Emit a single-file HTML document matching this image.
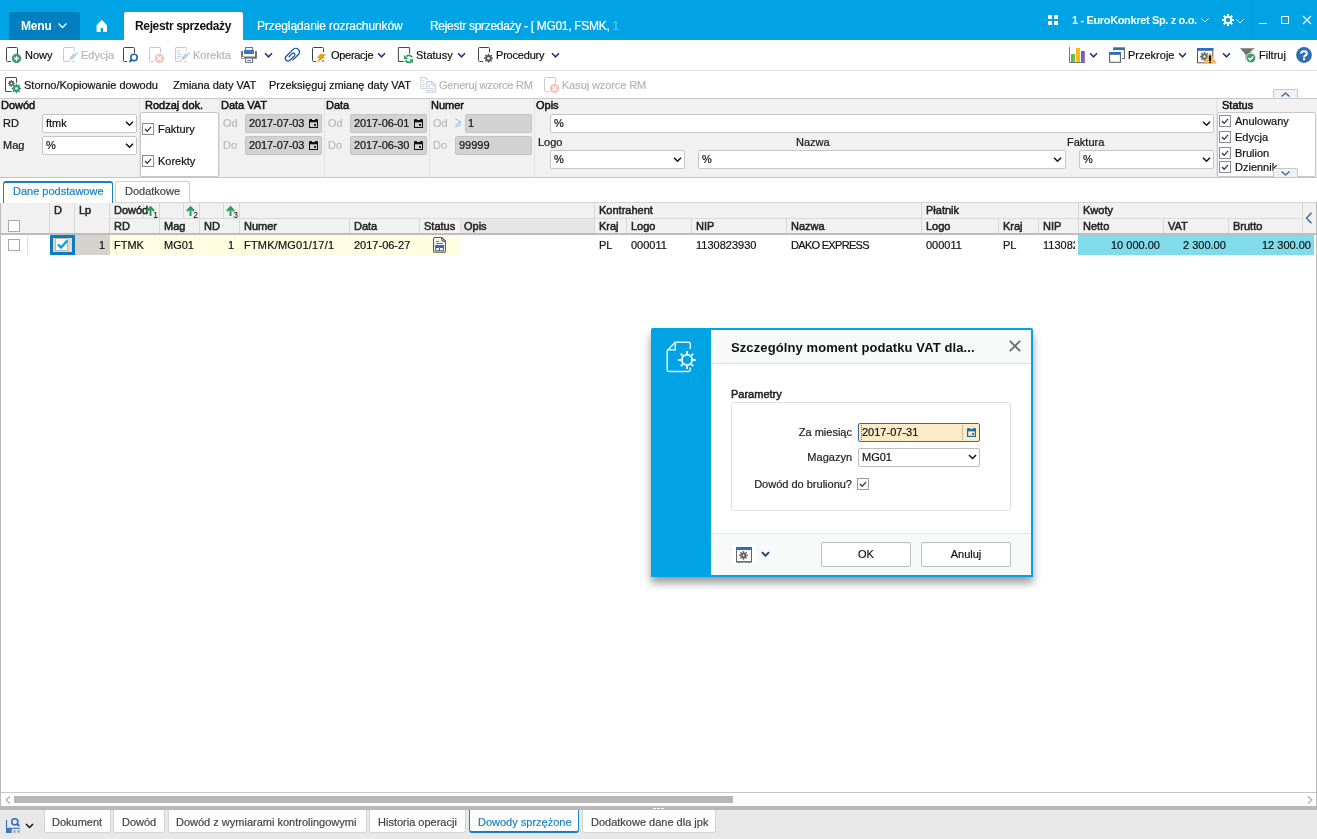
<!DOCTYPE html>
<html><head><meta charset="utf-8">
<style>
*{box-sizing:border-box;margin:0;padding:0}
html,body{width:1317px;height:839px;overflow:hidden;background:#fff;font-family:"Liberation Sans",sans-serif;font-size:11px;color:#111}
.a{position:absolute}
.t{position:absolute;white-space:nowrap;line-height:14px;font-size:11px;will-change:transform}
.t:not(.b):not(.bb){-webkit-text-stroke:0.2px currentColor}
.b{font-weight:normal;-webkit-text-stroke:0.5px currentColor}
.bb{font-weight:bold;letter-spacing:-0.4px}
svg{position:absolute;overflow:visible}
#hdr{position:absolute;left:0;top:0;width:1317px;height:40px;background:#00a3e3}
.dis{color:#b4b4b4}
.chev{position:absolute;width:8px;height:5px}

.sel{position:absolute;background:#fff;border:1px solid #c6c6c6;border-radius:2px}
.dt{position:absolute;background:#d2d2d2;border:1px solid #c4c4c4;border-radius:2px}
.cb{position:absolute;width:12px;height:12px;border:1px solid #8a8a8a;background:#fff}
.gl{color:#b8b8b8}
.vd{position:absolute;top:99px;width:1px;height:78px;background:#e2e2e2}

.gh{position:absolute;background:#f1f1f1}
.gv{position:absolute;width:1px;background:#d8d8d8}
.gt{will-change:transform;position:absolute;white-space:nowrap;line-height:14px;font-size:11px;font-weight:normal;-webkit-text-stroke:0.5px currentColor;color:#222}
.sort{position:absolute}
</style></head><body>
<!-- HEADER -->
<div id="hdr">
  <div class="a" style="left:9px;top:12px;width:71px;height:28px;background:#007fc0;border-radius:2px 2px 0 0"></div>
  <div class="t bb" style="left:21px;top:19px;font-size:12px;color:#fff;letter-spacing:-0.2px">Menu</div>
  <svg style="left:58px;top:23px" width="9" height="6" viewBox="0 0 9 6"><path d="M0.5 0.5L4.5 4.5L8.5 0.5" fill="none" stroke="#fff" stroke-width="1.3"/></svg>
  <svg style="left:96px;top:19px" width="12" height="13" viewBox="0 0 12 13"><path d="M0.6 6.3L5.8 0.8L11 6.3V13H7V9H4.6V13H0.6Z" fill="#fff"/></svg>
  <div class="a" style="left:124px;top:12px;width:119px;height:28px;background:#fff;border-radius:2px 2px 0 0"></div>
  <div class="t bb" style="left:135px;top:19px;font-size:12px;color:#111;letter-spacing:-0.35px">Rejestr sprzedaży</div>
  <div class="t" style="left:257px;top:19px;font-size:12px;color:#fff;letter-spacing:-0.1px">Przeglądanie rozrachunków</div>
  <div class="t" style="left:430px;top:19px;font-size:12px;color:#fff;letter-spacing:-0.3px">Rejestr sprzedaży - [ MG01, FSMK, <span style="color:#5cc4ee">1</span></div>
  <svg style="left:1048px;top:15px" width="10" height="10" viewBox="0 0 10 10" fill="#fff"><rect x="0" y="0" width="4" height="4"/><rect x="6" y="0" width="4" height="4"/><rect x="0" y="6" width="4" height="4"/><rect x="6" y="6" width="4" height="4"/></svg>
  <div class="t bb" style="left:1072px;top:13px;font-size:11px;color:#fff;letter-spacing:-0.35px">1 - EuroKonkret Sp. z o.o.</div>
  <svg style="left:1201px;top:18px" width="8" height="5" viewBox="0 0 8 5"><path d="M0.5 0.5L4 4L7.5 0.5" fill="none" stroke="#fff" stroke-width="1"/></svg>
  <svg style="left:1222px;top:14px" width="12" height="12" viewBox="0 0 12 12"><g fill="#fff"><circle cx="6" cy="6" r="4"/><rect x="5" y="0" width="2" height="12"/><rect x="0" y="5" width="12" height="2"/><rect x="5" y="0" width="2" height="12" transform="rotate(45 6 6)"/><rect x="5" y="0" width="2" height="12" transform="rotate(-45 6 6)"/></g><circle cx="6" cy="6" r="2.2" fill="#00a3e3"/></svg>
  <svg style="left:1236px;top:19px" width="8" height="5" viewBox="0 0 8 5"><path d="M0.5 0.5L4 4L7.5 0.5" fill="none" stroke="#fff" stroke-width="1"/></svg>
  <div class="a" style="left:1251px;top:0;width:1px;height:40px;background:#0a8fc8"></div>
  <div class="a" style="left:1259px;top:23px;width:8px;height:1px;background:#fff"></div>
  <div class="a" style="left:1281px;top:16px;width:8px;height:8px;border:1px solid #fff"></div>
  <svg style="left:1303px;top:16px" width="8" height="8" viewBox="0 0 8 8"><path d="M0 0L8 8M8 0L0 8" stroke="#fff" stroke-width="1.1"/></svg>
</div>

<!-- TOOLBAR 1 -->
<div class="a" style="left:0;top:70px;width:1317px;height:1px;background:#dcdcdc"></div>
<svg style="left:5px;top:46px" width="18" height="18" viewBox="0 0 18 18"><path d="M12.5 8V2.5Q12.5 1.5 11.5 1.5H2.5Q1.5 1.5 1.5 2.5V14.5Q1.5 15.5 2.5 15.5H6" fill="none" stroke="#444" stroke-width="1"/><circle cx="11.5" cy="12.5" r="4.7" fill="#3a9e6e"/><path d="M11.5 10V15M9 12.5H14" stroke="#fff" stroke-width="1.3"/></svg>
<div class="t" style="left:25px;top:48px">Nowy</div>
<svg style="left:62px;top:46px" width="18" height="18" viewBox="0 0 18 18"><path d="M12.5 5V2.5Q12.5 1.5 11.5 1.5H2.5Q1.5 1.5 1.5 2.5V14.5Q1.5 15.5 2.5 15.5H5M10 15.5H11.5Q12.5 15.5 12.5 14.5" fill="none" stroke="#c8c8c8" stroke-width="1"/><path d="M8.3 13.1L13.3 8.1" stroke="#b8cfe8" stroke-width="3.4"/><path d="M13.9 6.5L15.7 8.3" stroke="#b8cfe8" stroke-width="1.6"/><path d="M5.2 16.6L6.5 13.4L8.4 15.3Z" fill="#b8cfe8"/></svg>
<div class="t dis" style="left:81px;top:48px">Edycja</div>
<svg style="left:122px;top:46px" width="18" height="18" viewBox="0 0 18 18"><path d="M12.5 7V2.5Q12.5 1.5 11.5 1.5H2.5Q1.5 1.5 1.5 2.5V14.5Q1.5 15.5 2.5 15.5H5" fill="none" stroke="#444" stroke-width="1"/><circle cx="12" cy="11.5" r="3.2" fill="none" stroke="#2a64b0" stroke-width="1.6"/><path d="M9.8 13.8L7.5 16" stroke="#2a64b0" stroke-width="2"/></svg>
<svg style="left:148px;top:46px" width="18" height="18" viewBox="0 0 18 18"><path d="M12.5 7V2.5Q12.5 1.5 11.5 1.5H2.5Q1.5 1.5 1.5 2.5V14.5Q1.5 15.5 2.5 15.5H6" fill="none" stroke="#c8c8c8" stroke-width="1"/><circle cx="11.5" cy="12.5" r="4.7" fill="#f2c4bc"/><path d="M9.5 10.5L13.5 14.5M13.5 10.5L9.5 14.5" stroke="#fff" stroke-width="1.2"/></svg>
<svg style="left:174px;top:46px" width="18" height="18" viewBox="0 0 18 18"><path d="M12.5 5V2.5Q12.5 1.5 11.5 1.5H2.5Q1.5 1.5 1.5 2.5V14.5Q1.5 15.5 2.5 15.5H5M10 15.5H11.5Q12.5 15.5 12.5 14.5" fill="none" stroke="#c8c8c8" stroke-width="1"/><path d="M3 4.5H6M3 6.5H6M3 8.5H8M3 10.5H7M3 12.5H6" stroke="#bcd0e8" stroke-width="0.8"/><path d="M8.3 13.1L13.3 8.1" stroke="#b8cfe8" stroke-width="3.4"/><path d="M13.9 6.5L15.7 8.3" stroke="#b8cfe8" stroke-width="1.6"/><path d="M5.2 16.6L6.5 13.4L8.4 15.3Z" fill="#b8cfe8"/></svg>
<div class="t dis" style="left:193px;top:48px">Korekta</div>
<svg style="left:240px;top:46px" width="18" height="18" viewBox="0 0 18 18"><rect x="5.6" y="1.5" width="6.9" height="3.5" fill="#fff" stroke="#707070" stroke-width="1"/><path d="M1.1 5H3.1V10.5H15V5H16.9V12.7H1.1Z" fill="#707070"/><rect x="4" y="3.9" width="10" height="4.1" fill="#3a78c0"/><rect x="2" y="10.9" width="2" height="1.3" fill="#fff"/><rect x="5.6" y="12.1" width="6.9" height="4.3" fill="#fff" stroke="#707070" stroke-width="1"/><path d="M7.2 14.5H10.9" stroke="#3a78c0" stroke-width="1"/></svg>
<svg style="left:264px;top:52px" width="9" height="7" viewBox="0 0 9 7"><path d="M1 1.2L4.5 4.8L8 1.2" fill="none" stroke="#1a3a6e" stroke-width="1.5"/></svg>
<svg style="left:280px;top:45px" width="24" height="21" viewBox="0 0 24 21"><path d="M12.4 15.4L18.35 9.45A3.6 3.6 0 0 0 13.25 4.35L5.8 11.7A2.78 2.78 0 0 0 9.7 15.55L14.6 10.65A1.6 1.6 0 0 0 12.35 8.4L8.8 11.95" fill="none" stroke="#1a4ea8" stroke-width="1.25"/></svg>
<svg style="left:311px;top:46px" width="18" height="18" viewBox="0 0 18 18"><path d="M12.5 6V2.5Q12.5 1.5 11.5 1.5H2.5Q1.5 1.5 1.5 2.5V14.5Q1.5 15.5 2.5 15.5H5" fill="none" stroke="#444" stroke-width="1"/><path d="M12.5 14V14.5Q12.5 15.5 11.5 15.5H10.8" fill="none" stroke="#444" stroke-width="1"/><path d="M9.2 8.1L15.2 8.2L12.4 10.8L14 11.2L5.2 16.9L8.6 12.4L6 11.9Z" fill="#e89a1a"/></svg>
<div class="t" style="left:331px;top:48px;letter-spacing:-0.3px">Operacje</div>
<svg style="left:377px;top:52px" width="9" height="7" viewBox="0 0 9 7"><path d="M1 1.2L4.5 4.8L8 1.2" fill="none" stroke="#1a3a6e" stroke-width="1.5"/></svg>
<svg style="left:396px;top:45px" width="20" height="20" viewBox="0 0 20 20"><path d="M13.6 8.8V3.4Q13.6 2.4 12.6 2.4H3.4Q2.4 2.4 2.4 3.4V15.4Q2.4 16.4 3.4 16.4H7.6" fill="none" stroke="#4a4a4a" stroke-width="1.05"/><path d="M16.2 12.4A3.6 3.6 0 0 0 10.4 11.6M9.5 15.4A3.6 3.6 0 0 0 15.4 16.3" fill="none" stroke="#1f9a5c" stroke-width="1.7"/><path d="M8 9.9V13.9H12Z M13.2 14.2H17V18Z" fill="#1f9a5c"/></svg>
<div class="t" style="left:416px;top:48px">Statusy</div>
<svg style="left:457px;top:52px" width="9" height="7" viewBox="0 0 9 7"><path d="M1 1.2L4.5 4.8L8 1.2" fill="none" stroke="#1a3a6e" stroke-width="1.5"/></svg>
<svg style="left:477px;top:46px" width="18" height="18" viewBox="0 0 18 18"><path d="M12.5 6.5V2.5Q12.5 1.5 11.5 1.5H2.5Q1.5 1.5 1.5 2.5V14.5Q1.5 15.5 2.5 15.5H6" fill="none" stroke="#444" stroke-width="1"/><path d="M10.73 8.99L10.92 7.64L12.08 7.64L12.27 8.99L13.22 9.39L14.32 8.57L15.13 9.38L14.31 10.48L14.71 11.43L16.06 11.62L16.06 12.78L14.71 12.97L14.31 13.92L15.13 15.02L14.32 15.83L13.22 15.01L12.27 15.41L12.08 16.76L10.92 16.76L10.73 15.41L9.78 15.01L8.68 15.83L7.87 15.02L8.69 13.92L8.29 12.97L6.94 12.78L6.94 11.62L8.29 11.43L8.69 10.48L7.87 9.38L8.68 8.57L9.78 9.39Z" fill="#555"/><circle cx="11.5" cy="12.2" r="1.3" fill="#fff"/></svg>
<div class="t" style="left:496px;top:48px;letter-spacing:-0.2px">Procedury</div>
<svg style="left:551px;top:52px" width="9" height="7" viewBox="0 0 9 7"><path d="M1 1.2L4.5 4.8L8 1.2" fill="none" stroke="#1a3a6e" stroke-width="1.5"/></svg>

<!-- right toolbar -->
<svg style="left:1068px;top:46px" width="18" height="18" viewBox="0 0 18 18"><path d="M1.5 1V16.5H17" fill="none" stroke="#777" stroke-width="1"/><rect x="3" y="8" width="3.9" height="8" fill="#5cb860"/><rect x="8" y="2" width="4" height="14" fill="#fbbd08"/><rect x="13" y="5" width="3.8" height="11" fill="#7e57c8"/></svg>
<svg style="left:1089px;top:52px" width="9" height="7" viewBox="0 0 9 7"><path d="M1 1.2L4.5 4.8L8 1.2" fill="none" stroke="#1a3a6e" stroke-width="1.5"/></svg>
<svg style="left:1108px;top:46px" width="18" height="18" viewBox="0 0 18 18"><path d="M5.5 4.5V3.5M16.4 3V12.5H14.1" fill="none" stroke="#555" stroke-width="1"/><rect x="5.1" y="1.3" width="11.8" height="2.7" fill="#2f6db5"/><rect x="1.6" y="6.5" width="10.8" height="9.8" fill="#fff" stroke="#555" stroke-width="1"/><rect x="1.1" y="6" width="11.8" height="2.8" fill="#2f6db5"/></svg>
<div class="t" style="left:1128px;top:48px">Przekroje</div>
<svg style="left:1178px;top:52px" width="9" height="7" viewBox="0 0 9 7"><path d="M1 1.2L4.5 4.8L8 1.2" fill="none" stroke="#1a3a6e" stroke-width="1.5"/></svg>
<svg style="left:1196px;top:46px" width="22" height="20" viewBox="0 0 22 20"><rect x="1.5" y="2.5" width="15.3" height="14.3" fill="#fff" stroke="#555" stroke-width="1"/><rect x="1" y="2" width="16.3" height="2.8" fill="#2f6db5"/><g transform="translate(8.5 10.5)" fill="#666"><circle r="3"/><rect x="-0.8" y="-4.6" width="1.6" height="9.2"/><rect x="-4.6" y="-0.8" width="9.2" height="1.6"/><rect x="-0.8" y="-4.6" width="1.6" height="9.2" transform="rotate(45)"/><rect x="-0.8" y="-4.6" width="1.6" height="9.2" transform="rotate(-45)"/><circle r="1.2" fill="#fff"/></g><path d="M14 6.2L20.9 17.6H7.6Z" fill="#f0b860"/><rect x="13" y="9.5" width="2" height="5.5" fill="#111"/><rect x="13" y="15.7" width="2" height="1.2" fill="#111"/></svg>
<svg style="left:1222px;top:52px" width="9" height="7" viewBox="0 0 9 7"><path d="M1 1.2L4.5 4.8L8 1.2" fill="none" stroke="#1a3a6e" stroke-width="1.5"/></svg>
<svg style="left:1239px;top:46px" width="18" height="18" viewBox="0 0 18 18"><path d="M1 2.2H15.8L10 8.5L6.5 14.5V8.5Z" fill="#707070"/><path d="M14.6 3L11.6 6" stroke="#fff" stroke-width="1"/><circle cx="11.9" cy="12" r="4.9" fill="#3aa06a" stroke="#fff" stroke-width="0.8"/><path d="M9.5 12L11.2 13.8L14.3 10.5" fill="none" stroke="#fff" stroke-width="1.6"/></svg>
<div class="t" style="left:1259px;top:48px">Filtruj</div>
<svg style="left:1296px;top:47px" width="16" height="16" viewBox="0 0 16 16"><circle cx="8" cy="8" r="7.9" fill="#2f6db3"/><path d="M5.2 6.5Q5.2 4.3 8 4.3Q10.8 4.3 10.8 6.4Q10.8 7.6 9.4 8.4Q8.1 9.1 8.1 10.4" fill="none" stroke="#fff" stroke-width="2.1"/><rect x="7" y="11.3" width="2.2" height="1.9" fill="#fff"/></svg>

<!-- TOOLBAR 2 -->
<div class="a" style="left:0;top:98px;width:1317px;height:1px;background:#c8c8c8"></div>
<svg style="left:4px;top:76px" width="18" height="18" viewBox="0 0 18 18"><path d="M12.5 6.7V2.5Q12.5 1.5 11.5 1.5H2.5Q1.5 1.5 1.5 2.5V14.5Q1.5 15.5 2.5 15.5H7.7" fill="none" stroke="#4a4a4a" stroke-width="1.05"/><path d="M6.82 4.97L6.96 3.93L7.84 3.93L7.98 4.97L8.71 5.27L9.55 4.63L10.17 5.25L9.53 6.09L9.83 6.82L10.87 6.96L10.87 7.84L9.83 7.98L9.53 8.71L10.17 9.55L9.55 10.17L8.71 9.53L7.98 9.83L7.84 10.87L6.96 10.87L6.82 9.83L6.09 9.53L5.25 10.17L4.63 9.55L5.27 8.71L4.97 7.98L3.93 7.84L3.93 6.96L4.97 6.82L5.27 6.09L4.63 5.25L5.25 4.63L6.09 5.27Z" fill="#555"/><circle cx="7.4" cy="7.4" r="1.0" fill="#fff"/><path d="M11.58 9.00L11.80 7.64L13.00 7.64L13.22 9.00L14.23 9.42L15.34 8.61L16.19 9.46L15.38 10.57L15.80 11.58L17.16 11.80L17.16 13.00L15.80 13.22L15.38 14.23L16.19 15.34L15.34 16.19L14.23 15.38L13.22 15.80L13.00 17.16L11.80 17.16L11.58 15.80L10.57 15.38L9.46 16.19L8.61 15.34L9.42 14.23L9.00 13.22L7.64 13.00L7.64 11.80L9.00 11.58L9.42 10.57L8.61 9.46L9.46 8.61L10.57 9.42Z" fill="#2a9a62"/><circle cx="12.4" cy="12.4" r="1.3" fill="#fff"/></svg>
<div class="t" style="left:24px;top:78px">Storno/Kopiowanie dowodu</div>
<div class="t" style="left:173px;top:78px">Zmiana daty VAT</div>
<div class="t" style="left:269px;top:78px">Przeksięguj zmianę daty VAT</div>
<svg style="left:416px;top:73px" width="22" height="22" viewBox="0 0 22 22"><path d="M10 15.6H4.8V4.6H9.6L12.4 7.4" fill="none" stroke="#cdcdcd" stroke-width="1"/><path d="M9.6 4.6V6.6" stroke="#cdcdcd" stroke-width="1"/><path d="M6 7.4H7.8M6 9.4H7.8M6 11.4H8.8M6 13.4H8.8" stroke="#bcd2ea" stroke-width="1"/><path d="M10.8 8.6H15.8L19.3 12.1V19.3H10.8Z" fill="#fff" stroke="#cdcdcd" stroke-width="1.1"/><path d="M15.6 8.6V11.8Q15.6 12.3 16.1 12.3H19.3" fill="none" stroke="#cdcdcd" stroke-width="1"/><path d="M12.1 11.4H14M12.1 13.4H14M12.1 15.4H17.8M12.1 17.4H17.8" stroke="#bcd2ea" stroke-width="1"/></svg>
<div class="t dis" style="left:439px;top:78px;letter-spacing:-0.2px">Generuj wzorce RM</div>
<svg style="left:543px;top:76px" width="18" height="18" viewBox="0 0 18 18"><path d="M12.5 7V2.5Q12.5 1.5 11.5 1.5H2.5Q1.5 1.5 1.5 2.5V14.5Q1.5 15.5 2.5 15.5H6" fill="none" stroke="#ccc" stroke-width="1"/><circle cx="11.5" cy="12.5" r="4.7" fill="#f2c4bc"/><path d="M9.5 10.5L13.5 14.5M13.5 10.5L9.5 14.5" stroke="#fff" stroke-width="1.2"/></svg>
<div class="t dis" style="left:562px;top:78px;letter-spacing:-0.1px">Kasuj wzorce RM</div>

<!-- FILTER PANEL -->
<div class="a" style="left:0;top:99px;width:1317px;height:78px;background:#f1f1f1"></div>
<div class="a" style="left:0;top:177px;width:1317px;height:1px;background:#c4c4c4"></div>
<div class="vd" style="left:139px"></div>
<div class="vd" style="left:219px"></div>
<div class="vd" style="left:324px"></div>
<div class="vd" style="left:429px"></div>
<div class="vd" style="left:534px"></div>
<div class="vd" style="left:1216px"></div>
<div class="t b" style="left:1px;top:98px">Dowód</div>
<div class="t" style="left:3px;top:116px">RD</div>
<div class="sel" style="left:42px;top:114px;width:95px;height:19px"></div>
<div class="t" style="left:46px;top:116px">ftmk</div>
<svg style="left:125px;top:121px" width="9" height="6" viewBox="0 0 9 6"><path d="M1 0.8L4.5 4.3L8 0.8" fill="none" stroke="#111" stroke-width="1.5"/></svg>
<div class="t" style="left:3px;top:138px">Mag</div>
<div class="sel" style="left:42px;top:136px;width:95px;height:19px"></div>
<div class="t" style="left:46px;top:138px">%</div>
<svg style="left:125px;top:143px" width="9" height="6" viewBox="0 0 9 6"><path d="M1 0.8L4.5 4.3L8 0.8" fill="none" stroke="#111" stroke-width="1.5"/></svg>
<div class="t b" style="left:145px;top:98px">Rodzaj dok.</div>
<div class="a" style="left:140px;top:112px;width:79px;height:65px;background:#fff;border:1px solid #c8c8c8;border-radius:2px"></div>
<svg style="left:142px;top:123px" width="12" height="12" viewBox="0 0 12 12"><rect x="0.5" y="0.5" width="11" height="11" fill="#fff" stroke="#8c8c8c" stroke-width="1"/><path d="M3 6L5.2 8.3L9 3.8" fill="none" stroke="#1a3a6e" stroke-width="1.3"/></svg>
<div class="t" style="left:158px;top:122px">Faktury</div>
<svg style="left:142px;top:155px" width="12" height="12" viewBox="0 0 12 12"><rect x="0.5" y="0.5" width="11" height="11" fill="#fff" stroke="#8c8c8c" stroke-width="1"/><path d="M3 6L5.2 8.3L9 3.8" fill="none" stroke="#1a3a6e" stroke-width="1.3"/></svg>
<div class="t" style="left:158px;top:154px">Korekty</div>

<div class="t b" style="left:221px;top:98px">Data VAT</div>
<div class="t gl" style="left:223px;top:116px">Od</div>
<div class="dt" style="left:245px;top:114px;width:77px;height:19px"></div>
<div class="t" style="left:249px;top:116px;letter-spacing:-0.1px">2017-07-03</div>
<svg style="left:309px;top:119px" width="9" height="9" viewBox="0 0 9 9"><rect x="0.3" y="0" width="2.6" height="1.5" fill="#111"/><rect x="6.1" y="0" width="2.6" height="1.5" fill="#111"/><rect x="0" y="1" width="9" height="2.3" fill="#111"/><rect x="0.5" y="1.5" width="8" height="7" fill="none" stroke="#111" stroke-width="1"/><rect x="5" y="5" width="2" height="1.8" fill="#111"/></svg>
<div class="t gl" style="left:223px;top:138px">Do</div>
<div class="dt" style="left:245px;top:136px;width:77px;height:19px"></div>
<div class="t" style="left:249px;top:138px;letter-spacing:-0.1px">2017-07-03</div>
<svg style="left:309px;top:141px" width="9" height="9" viewBox="0 0 9 9"><rect x="0.3" y="0" width="2.6" height="1.5" fill="#111"/><rect x="6.1" y="0" width="2.6" height="1.5" fill="#111"/><rect x="0" y="1" width="9" height="2.3" fill="#111"/><rect x="0.5" y="1.5" width="8" height="7" fill="none" stroke="#111" stroke-width="1"/><rect x="5" y="5" width="2" height="1.8" fill="#111"/></svg>

<div class="t b" style="left:326px;top:98px">Data</div>
<div class="t gl" style="left:328px;top:116px">Od</div>
<div class="dt" style="left:350px;top:114px;width:77px;height:19px"></div>
<div class="t" style="left:354px;top:116px;letter-spacing:-0.1px">2017-06-01</div>
<svg style="left:414px;top:119px" width="9" height="9" viewBox="0 0 9 9"><rect x="0.3" y="0" width="2.6" height="1.5" fill="#111"/><rect x="6.1" y="0" width="2.6" height="1.5" fill="#111"/><rect x="0" y="1" width="9" height="2.3" fill="#111"/><rect x="0.5" y="1.5" width="8" height="7" fill="none" stroke="#111" stroke-width="1"/><rect x="5" y="5" width="2" height="1.8" fill="#111"/></svg>
<div class="t gl" style="left:328px;top:138px">Do</div>
<div class="dt" style="left:350px;top:136px;width:77px;height:19px"></div>
<div class="t" style="left:354px;top:138px;letter-spacing:-0.1px">2017-06-30</div>
<svg style="left:414px;top:141px" width="9" height="9" viewBox="0 0 9 9"><rect x="0.3" y="0" width="2.6" height="1.5" fill="#111"/><rect x="6.1" y="0" width="2.6" height="1.5" fill="#111"/><rect x="0" y="1" width="9" height="2.3" fill="#111"/><rect x="0.5" y="1.5" width="8" height="7" fill="none" stroke="#111" stroke-width="1"/><rect x="5" y="5" width="2" height="1.8" fill="#111"/></svg>

<div class="t b" style="left:431px;top:98px">Numer</div>
<div class="t gl" style="left:433px;top:116px">Od</div>
<svg style="left:455px;top:118px" width="7" height="11" viewBox="0 0 7 11"><path d="M0.5 1L6 4L0.5 7M0.5 9L6 6.5" fill="none" stroke="#8fb4dc" stroke-width="1"/></svg>
<div class="dt" style="left:465px;top:114px;width:67px;height:19px"></div>
<div class="t" style="left:468px;top:116px">1</div>
<div class="t gl" style="left:433px;top:138px">Do</div>
<div class="dt" style="left:455px;top:136px;width:77px;height:19px"></div>
<div class="t" style="left:459px;top:138px">99999</div>

<div class="t b" style="left:536px;top:98px">Opis</div>
<div class="sel" style="left:550px;top:114px;width:664px;height:19px"></div>
<div class="t" style="left:554px;top:116px">%</div>
<svg style="left:1202px;top:121px" width="9" height="6" viewBox="0 0 9 6"><path d="M1 0.8L4.5 4.3L8 0.8" fill="none" stroke="#111" stroke-width="1.5"/></svg>
<div class="t" style="left:538px;top:135px">Logo</div>
<div class="sel" style="left:550px;top:150px;width:135px;height:19px"></div>
<div class="t" style="left:554px;top:152px">%</div>
<svg style="left:673px;top:157px" width="9" height="6" viewBox="0 0 9 6"><path d="M1 0.8L4.5 4.3L8 0.8" fill="none" stroke="#111" stroke-width="1.5"/></svg>
<div class="t" style="left:796px;top:135px">Nazwa</div>
<div class="sel" style="left:698px;top:150px;width:368px;height:19px"></div>
<div class="t" style="left:702px;top:152px">%</div>
<svg style="left:1053px;top:157px" width="9" height="6" viewBox="0 0 9 6"><path d="M1 0.8L4.5 4.3L8 0.8" fill="none" stroke="#111" stroke-width="1.5"/></svg>
<div class="t" style="left:1067px;top:135px">Faktura</div>
<div class="sel" style="left:1079px;top:150px;width:135px;height:19px"></div>
<div class="t" style="left:1083px;top:152px">%</div>
<svg style="left:1202px;top:157px" width="9" height="6" viewBox="0 0 9 6"><path d="M1 0.8L4.5 4.3L8 0.8" fill="none" stroke="#111" stroke-width="1.5"/></svg>

<div class="t b" style="left:1222px;top:98px">Status</div>
<div class="a" style="left:1217px;top:112px;width:99px;height:65px;background:#fff;border:1px solid #c8c8c8;border-radius:2px"></div>
<svg style="left:1219px;top:115px" width="12" height="12" viewBox="0 0 12 12"><rect x="0.5" y="0.5" width="11" height="11" fill="#fff" stroke="#8c8c8c" stroke-width="1"/><path d="M3 6L5.2 8.3L9 3.8" fill="none" stroke="#1a3a6e" stroke-width="1.3"/></svg>
<div class="t" style="left:1235px;top:114px">Anulowany</div>
<svg style="left:1219px;top:131px" width="12" height="12" viewBox="0 0 12 12"><rect x="0.5" y="0.5" width="11" height="11" fill="#fff" stroke="#8c8c8c" stroke-width="1"/><path d="M3 6L5.2 8.3L9 3.8" fill="none" stroke="#1a3a6e" stroke-width="1.3"/></svg>
<div class="t" style="left:1235px;top:130px">Edycja</div>
<svg style="left:1219px;top:147px" width="12" height="12" viewBox="0 0 12 12"><rect x="0.5" y="0.5" width="11" height="11" fill="#fff" stroke="#8c8c8c" stroke-width="1"/><path d="M3 6L5.2 8.3L9 3.8" fill="none" stroke="#1a3a6e" stroke-width="1.3"/></svg>
<div class="t" style="left:1235px;top:146px">Brulion</div>
<svg style="left:1219px;top:161px" width="12" height="12" viewBox="0 0 12 12"><rect x="0.5" y="0.5" width="11" height="11" fill="#fff" stroke="#8c8c8c" stroke-width="1"/><path d="M3 6L5.2 8.3L9 3.8" fill="none" stroke="#1a3a6e" stroke-width="1.3"/></svg>
<div class="a" style="left:1233px;top:160px;width:80px;height:16px;overflow:hidden"><div class="t" style="left:2px;top:0px">Dziennik</div></div>
<div class="a" style="left:1273px;top:168px;width:25px;height:9px;background:#f1f1f1;border:1px solid #c8c8c8;border-bottom:none;border-radius:2px 2px 0 0"></div>
<svg style="left:1281px;top:171px" width="9" height="5" viewBox="0 0 9 5"><path d="M0.5 0.5L4.5 4L8.5 0.5" fill="none" stroke="#2a5f9a" stroke-width="1.2"/></svg>
<div class="a" style="left:1273px;top:89px;width:25px;height:9px;background:#f2f2f2;border:1px solid #c8c8c8;border-bottom:none;border-radius:2px 2px 0 0"></div>
<svg style="left:1281px;top:92px" width="9" height="5" viewBox="0 0 9 5"><path d="M0.5 4.5L4.5 1L8.5 4.5" fill="none" stroke="#2a5f9a" stroke-width="1.2"/></svg>

<!-- TABS -->
<div class="a" style="left:3px;top:181px;width:110px;height:22px;background:#fff;border:1px solid #1a7fc1;border-top:2px solid #1a7fc1;border-bottom:none;border-radius:3px 3px 0 0"></div>
<div class="t" style="left:13px;top:184px;color:#1a7fc1">Dane podstawowe</div>
<div class="a" style="left:115px;top:181px;width:75px;height:22px;background:#fff;border:1px solid #cfcfcf;border-bottom:none;border-radius:3px 3px 0 0"></div>
<div class="t" style="left:125px;top:184px;color:#444">Dodatkowe</div>

<!-- GRID -->
<div class="a" style="left:115px;top:202px;width:1201px;height:1px;background:#d4d4d4"></div>
<div class="a" style="left:0;top:203px;width:1px;height:603px;background:#bcbcbc"></div>
<div class="a" style="left:1316px;top:202px;width:1px;height:604px;background:#bcbcbc"></div>
<div class="gh" style="left:1px;top:203px;width:1315px;height:30px"></div>
<div class="a" style="left:460px;top:219px;width:134px;height:14px;background:#e6e6e6"></div>
<div class="a" style="left:1px;top:233px;width:1315px;height:2px;background:#bdbdbd"></div>
<!-- header row separators -->
<div class="a" style="left:109px;top:218px;width:1193px;height:1px;background:#dadada"></div>
<div class="gv" style="left:49px;top:203px;height:30px"></div>
<div class="gv" style="left:74px;top:203px;height:30px"></div>
<div class="gv" style="left:109px;top:203px;height:30px"></div>
<div class="gv" style="left:143px;top:203px;height:15px"></div>
<div class="gv" style="left:159px;top:203px;height:30px"></div>
<div class="gv" style="left:183px;top:203px;height:15px"></div>
<div class="gv" style="left:199px;top:203px;height:30px"></div>
<div class="gv" style="left:223px;top:203px;height:15px"></div>
<div class="gv" style="left:239px;top:203px;height:30px"></div>
<div class="gv" style="left:349px;top:219px;height:14px"></div>
<div class="gv" style="left:419px;top:219px;height:14px"></div>
<div class="gv" style="left:460px;top:219px;height:14px"></div>
<div class="gv" style="left:594px;top:203px;height:30px"></div>
<div class="gv" style="left:626px;top:219px;height:14px"></div>
<div class="gv" style="left:691px;top:219px;height:14px"></div>
<div class="gv" style="left:786px;top:219px;height:14px"></div>
<div class="gv" style="left:921px;top:203px;height:30px"></div>
<div class="gv" style="left:998px;top:219px;height:14px"></div>
<div class="gv" style="left:1038px;top:219px;height:14px"></div>
<div class="gv" style="left:1078px;top:203px;height:30px"></div>
<div class="gv" style="left:1163px;top:219px;height:14px"></div>
<div class="gv" style="left:1228px;top:219px;height:14px"></div>
<div class="gv" style="left:1302px;top:203px;height:30px"></div>
<svg style="left:1305px;top:212px" width="8" height="12" viewBox="0 0 8 12"><path d="M6.5 0.8L1.5 6L6.5 11.2" fill="none" stroke="#2a64a8" stroke-width="1.3"/></svg>

<svg style="left:8px;top:220px" width="12" height="12" viewBox="0 0 12 12"><rect x="0.5" y="0.5" width="11" height="11" fill="#fff" stroke="#a8a8a8" stroke-width="1"/></svg>
<div class="gt" style="left:54px;top:203px">D</div>
<div class="gt" style="left:79px;top:203px">Lp</div>
<div class="a" style="left:110px;top:203px;width:40px;height:15px;overflow:hidden"><div class="gt" style="left:4px;top:0px">Dowód</div></div>
<svg class="sort" style="left:146px;top:205px" width="12" height="13" viewBox="0 0 12 13"><path d="M4.5 11V2.5M1 6L4.5 2.2L8 6" fill="none" stroke="#2a9a5a" stroke-width="2"/><text x="7.2" y="12.8" font-family="Liberation Sans" font-size="8.5" fill="#000">1</text></svg><svg class="sort" style="left:186px;top:205px" width="12" height="13" viewBox="0 0 12 13"><path d="M4.5 11V2.5M1 6L4.5 2.2L8 6" fill="none" stroke="#2a9a5a" stroke-width="2"/><text x="7.2" y="12.8" font-family="Liberation Sans" font-size="8.5" fill="#000">2</text></svg><svg class="sort" style="left:226px;top:205px" width="12" height="13" viewBox="0 0 12 13"><path d="M4.5 11V2.5M1 6L4.5 2.2L8 6" fill="none" stroke="#2a9a5a" stroke-width="2"/><text x="7.2" y="12.8" font-family="Liberation Sans" font-size="8.5" fill="#000">3</text></svg>
<div class="gt" style="left:114px;top:219px">RD</div>
<div class="gt" style="left:164px;top:219px">Mag</div>
<div class="gt" style="left:204px;top:219px">ND</div>
<div class="gt" style="left:244px;top:219px">Numer</div>
<div class="gt" style="left:354px;top:219px">Data</div>
<div class="gt" style="left:424px;top:219px">Status</div>
<div class="gt" style="left:464px;top:219px">Opis</div>
<div class="gt" style="left:599px;top:203px">Kontrahent</div>
<div class="gt" style="left:599px;top:219px">Kraj</div>
<div class="gt" style="left:631px;top:219px">Logo</div>
<div class="gt" style="left:696px;top:219px">NIP</div>
<div class="gt" style="left:791px;top:219px">Nazwa</div>
<div class="gt" style="left:926px;top:203px">Płatnik</div>
<div class="gt" style="left:926px;top:219px">Logo</div>
<div class="gt" style="left:1003px;top:219px">Kraj</div>
<div class="gt" style="left:1043px;top:219px">NIP</div>
<div class="gt" style="left:1083px;top:203px">Kwoty</div>
<div class="gt" style="left:1083px;top:219px">Netto</div>
<div class="gt" style="left:1168px;top:219px">VAT</div>
<div class="gt" style="left:1233px;top:219px">Brutto</div>

<!-- DATA ROW -->
<svg style="left:8px;top:239px" width="12" height="12" viewBox="0 0 12 12"><rect x="0.5" y="0.5" width="11" height="11" fill="#fff" stroke="#a8a8a8" stroke-width="1"/></svg>
<div class="a" style="left:27px;top:235px;width:1px;height:20px;background:#cfe4f5"></div>
<div class="a" style="left:75px;top:235px;width:35px;height:20px;background:#d6d2cc"></div>
<div class="a" style="left:110px;top:235px;width:350px;height:20px;background:#fffde2"></div>
<div class="a" style="left:1078px;top:235px;width:236px;height:20px;background:#80dcea"></div>
<div class="a" style="left:50px;top:235px;width:25px;height:20px;background:#e8d8c8;border:3px solid #0a7cc2"></div>
<svg style="left:55px;top:238px" width="14" height="14" viewBox="0 0 14 14"><rect x="0.5" y="0.5" width="12" height="12" fill="#fff" stroke="#b8b8b8" stroke-width="1"/><path d="M3 6.5L6 9.5L12.5 2.5" fill="none" stroke="#0aa0e0" stroke-width="2.4"/></svg>
<div class="t" style="left:99px;top:238px">1</div>
<div class="t" style="left:114px;top:238px">FTMK</div>
<div class="t" style="left:164px;top:238px">MG01</div>
<div class="t" style="left:228px;top:238px">1</div>
<div class="t" style="left:244px;top:238px;letter-spacing:0.2px">FTMK/MG01/17/1</div>
<div class="t" style="left:354px;top:238px">2017-06-27</div>
<svg style="left:432px;top:236px" width="15" height="18" viewBox="0 0 15 18"><path d="M2.5 1.5H9.8L13.4 5.1V15.2Q13.4 16.2 12.4 16.2H2.6Q1.6 16.2 1.6 15.2V2.5Q1.6 1.5 2.5 1.5Z" fill="#fff" stroke="#555" stroke-width="1.1"/><path d="M9.8 1.5V4.1Q9.8 5.1 10.8 5.1H13.4" fill="none" stroke="#555" stroke-width="1.1"/><path d="M4 5.4H7M4 7.4H11" stroke="#555" stroke-width="0.9"/><rect x="3.7" y="9.5" width="7.6" height="5.3" fill="#fff" stroke="#555" stroke-width="1"/><rect x="3.2" y="9" width="8.6" height="3" fill="#2a6cb8"/><path d="M7.5 12V15" stroke="#555" stroke-width="0.9"/><path d="M7.5 9V12" stroke="#4a84c4" stroke-width="0.6"/></svg>
<div class="t" style="left:599px;top:238px">PL</div>
<div class="t" style="left:631px;top:238px">000011</div>
<div class="t" style="left:696px;top:238px">1130823930</div>
<div class="t" style="left:791px;top:238px;letter-spacing:-0.7px">DAKO EXPRESS</div>
<div class="t" style="left:926px;top:238px">000011</div>
<div class="t" style="left:1003px;top:238px">PL</div>
<div class="a" style="left:1038px;top:235px;width:37px;height:20px;overflow:hidden"><div class="t" style="left:5px;top:3px">1130823930</div></div>
<div class="t" style="left:1111px;top:238px">10 000.00</div>
<div class="t" style="left:1183px;top:238px">2 300.00</div>
<div class="t" style="left:1262px;top:238px">12 300.00</div>

<!-- SCROLLBAR -->
<div class="a" style="left:1px;top:792px;width:1315px;height:1px;background:#c8c8c8"></div>
<svg style="left:5px;top:796px" width="6" height="8" viewBox="0 0 6 8"><path d="M5 0.5L1 4L5 7.5" fill="none" stroke="#a8a8a8" stroke-width="1.1"/></svg>
<div class="a" style="left:14px;top:796px;width:719px;height:7px;background:#b8b8b8"></div>
<svg style="left:1307px;top:796px" width="6" height="8" viewBox="0 0 6 8"><path d="M1 0.5L5 4L1 7.5" fill="none" stroke="#a8a8a8" stroke-width="1.1"/></svg>
<div class="a" style="left:0;top:806px;width:1317px;height:4px;background:#b8b8b8"></div>
<div class="a" style="left:653px;top:808px;width:3px;height:1px;background:#fff"></div>
<div class="a" style="left:657px;top:808px;width:3px;height:1px;background:#fff"></div>
<div class="a" style="left:661px;top:808px;width:3px;height:1px;background:#fff"></div>

<!-- BOTTOM TABS -->
<div class="a" style="left:0;top:810px;width:1317px;height:29px;background:#e8e8e8"></div>
<svg style="left:5px;top:818px" width="16" height="16" viewBox="0 0 16 16"><path d="M1.5 2V15" stroke="#2a6cb8" stroke-width="1.1"/><path d="M1 10.3H15" stroke="#2a6cb8" stroke-width="1"/><rect x="1" y="10" width="5.7" height="5" fill="#3a78b8"/><rect x="8.2" y="12.2" width="2.6" height="2.6" fill="#b0b0b0"/><rect x="12.2" y="12.2" width="2.8" height="2.6" fill="#b0b0b0"/><circle cx="9.8" cy="3.8" r="3.1" fill="none" stroke="#2a6cb8" stroke-width="1.5"/><path d="M12 6L14.3 8.2" stroke="#2a6cb8" stroke-width="1.8"/></svg>
<svg style="left:25px;top:823px" width="9" height="6" viewBox="0 0 9 6"><path d="M1 1L4.5 4.5L8 1" fill="none" stroke="#111" stroke-width="1.5"/></svg>
<div class="a" style="left:44px;top:810px;width:67px;height:23px;background:#fff;border:1px solid #d4d4d4;border-top:none;border-radius:0 0 3px 3px"></div>
<div class="t" style="left:52px;top:815px;color:#444">Dokument</div>
<div class="a" style="left:113px;top:810px;width:52px;height:23px;background:#fff;border:1px solid #d4d4d4;border-top:none;border-radius:0 0 3px 3px"></div>
<div class="t" style="left:122px;top:815px;color:#444">Dowód</div>
<div class="a" style="left:168px;top:810px;width:199px;height:23px;background:#fff;border:1px solid #d4d4d4;border-top:none;border-radius:0 0 3px 3px"></div>
<div class="t" style="left:176px;top:815px;color:#444">Dowód z wymiarami kontrolingowymi</div>
<div class="a" style="left:369px;top:810px;width:97px;height:23px;background:#fff;border:1px solid #d4d4d4;border-top:none;border-radius:0 0 3px 3px"></div>
<div class="t" style="left:378px;top:815px;color:#444">Historia operacji</div>
<div class="a" style="left:469px;top:810px;width:110px;height:23px;background:#fff;border:1px solid #1a84c6;border-bottom:2px solid #1a7cc0;border-top:none;border-radius:0 0 3px 3px"></div>
<div class="t" style="left:478px;top:815px;color:#1a7fc1">Dowody sprzężone</div>
<div class="a" style="left:582px;top:810px;width:134px;height:23px;background:#fff;border:1px solid #d4d4d4;border-top:none;border-radius:0 0 3px 3px"></div>
<div class="t" style="left:591px;top:815px;color:#444">Dodatkowe dane dla jpk</div>

<!-- DIALOG -->
<div class="a" style="left:651px;top:328px;width:382px;height:249px;background:#00a3e3;border-radius:2px 2px 0 0;box-shadow:0 6px 9px rgba(0,0,0,0.4)"></div>
<svg style="left:655px;top:332px" width="50" height="50" viewBox="0 0 50 50"><path d="M35.3 17V12Q35.3 10.3 33.6 10.3H20.3L12.2 18.5V37.8Q12.2 39.5 13.9 39.5H33.6Q35.3 39.5 35.3 37.8V35.5" fill="none" stroke="#e6f5fc" stroke-width="1.5"/><path d="M20.3 10.5V17.8H12.5" fill="none" stroke="#e6f5fc" stroke-width="1.5"/><g transform="translate(32 27.9)" stroke="#e6f5fc" fill="none"><circle r="5.1" stroke-width="2"/><path d="M0 -9V-6M0 6V9M-9 0H-6M6 0H9M-6.2 -6.2L-4.3 -4.3M4.3 4.3L6.2 6.2M6.2 -6.2L4.3 -4.3M-4.3 4.3L-6.2 6.2" stroke-width="2"/></g></svg>
<div class="a" style="left:711px;top:330px;width:320px;height:245px;background:#fff"></div>
<div class="a" style="left:711px;top:330px;width:320px;height:34px;background:#f8f9f9;border-bottom:1px solid #e2e2e2"></div>
<div class="t bb" style="left:731px;top:340px;font-size:13px;line-height:16px;font-weight:bold;letter-spacing:0.1px;color:#111">Szczególny moment podatku VAT dla...</div>
<svg style="left:1009px;top:340px" width="12" height="12" viewBox="0 0 12 12"><path d="M0.8 0.8L11.2 11.2M11.2 0.8L0.8 11.2" stroke="#6a6a6a" stroke-width="1.7"/></svg>
<div class="t b" style="left:731px;top:387px;color:#222">Parametry</div>
<div class="a" style="left:731px;top:402px;width:280px;height:109px;border:1px solid #e2e2e2;border-radius:3px"></div>
<div class="t" style="left:751px;top:425px;width:101px;text-align:right;color:#222">Za miesiąc</div>
<div class="a" style="left:858px;top:423px;width:122px;height:19px;background:#fdebc8;border:1px solid #3a6d93;border-radius:2px"></div>
<div class="a" style="left:861px;top:425px;width:0;height:15px;border-left:1px dotted #777"></div>
<div class="a" style="left:962px;top:425px;width:0;height:15px;border-left:1px dotted #999"></div>
<svg style="left:967px;top:428px" width="9" height="9" viewBox="0 0 9 9"><rect x="0.3" y="0" width="2.6" height="1.5" fill="#1a6fa8"/><rect x="6.1" y="0" width="2.6" height="1.5" fill="#1a6fa8"/><rect x="0" y="1" width="9" height="2.3" fill="#1a6fa8"/><rect x="0.6" y="1.5" width="7.8" height="6.9" fill="none" stroke="#1a6fa8" stroke-width="1.2"/><rect x="5" y="5" width="2" height="1.8" fill="#1a6fa8"/></svg>
<div class="t" style="left:862px;top:425px;color:#111">2017-07-31</div>
<div class="t" style="left:751px;top:450px;width:101px;text-align:right;color:#222">Magazyn</div>
<div class="sel" style="left:858px;top:448px;width:122px;height:19px;border-color:#bdbdbd"></div>
<div class="t" style="left:862px;top:450px;color:#111">MG01</div>
<svg style="left:968px;top:454px" width="9" height="6" viewBox="0 0 9 6"><path d="M1 1L4.5 4.5L8 1" fill="none" stroke="#111" stroke-width="1.5"/></svg>
<div class="t" style="left:731px;top:477px;width:121px;text-align:right;color:#222">Dowód do brulionu?</div>
<svg style="left:857px;top:478px" width="12" height="12" viewBox="0 0 12 12"><rect x="0.5" y="0.5" width="11" height="11" fill="#fff" stroke="#9a9a9a" stroke-width="1"/><path d="M3 6L5.2 8.3L9 3.8" fill="none" stroke="#1a3a6e" stroke-width="1.3"/></svg>
<div class="a" style="left:711px;top:533px;width:320px;height:1px;background:#e4e4e4"></div>
<div class="a" style="left:711px;top:534px;width:320px;height:41px;background:#f8f9f9"></div>
<div class="a" style="left:732px;top:545px;width:24px;height:19px;background:#fff;border-radius:2px"></div>
<svg style="left:736px;top:547px" width="16" height="16" viewBox="0 0 16 16"><rect x="0.5" y="1" width="15" height="14" fill="#fff" stroke="#666" stroke-width="1"/><path d="M0.5 14.8H15.5" stroke="#666" stroke-width="1.3"/><rect x="0" y="0" width="16" height="3" fill="#2f6db5"/><g transform="translate(7.5 8.4)" fill="#666"><circle r="2.9"/><rect x="-0.7" y="-4.4" width="1.4" height="8.8"/><rect x="-4.4" y="-0.7" width="8.8" height="1.4"/><rect x="-0.7" y="-4.4" width="1.4" height="8.8" transform="rotate(45)"/><rect x="-0.7" y="-4.4" width="1.4" height="8.8" transform="rotate(-45)"/><circle r="0.9" fill="#fff"/></g></svg>
<svg style="left:761px;top:551px" width="9" height="7" viewBox="0 0 9 7"><path d="M1 1.2L4.5 4.8L8 1.2" fill="none" stroke="#1a3a6e" stroke-width="1.8"/></svg>
<div class="a" style="left:821px;top:542px;width:90px;height:25px;background:#fff;border:1px solid #bdbdbd;border-radius:2px"></div>
<div class="t" style="left:821px;top:547px;width:90px;text-align:center;color:#111">OK</div>
<div class="a" style="left:921px;top:542px;width:90px;height:25px;background:#fff;border:1px solid #bdbdbd;border-radius:2px"></div>
<div class="t" style="left:921px;top:547px;width:90px;text-align:center;color:#111">Anuluj</div>
</body></html>
